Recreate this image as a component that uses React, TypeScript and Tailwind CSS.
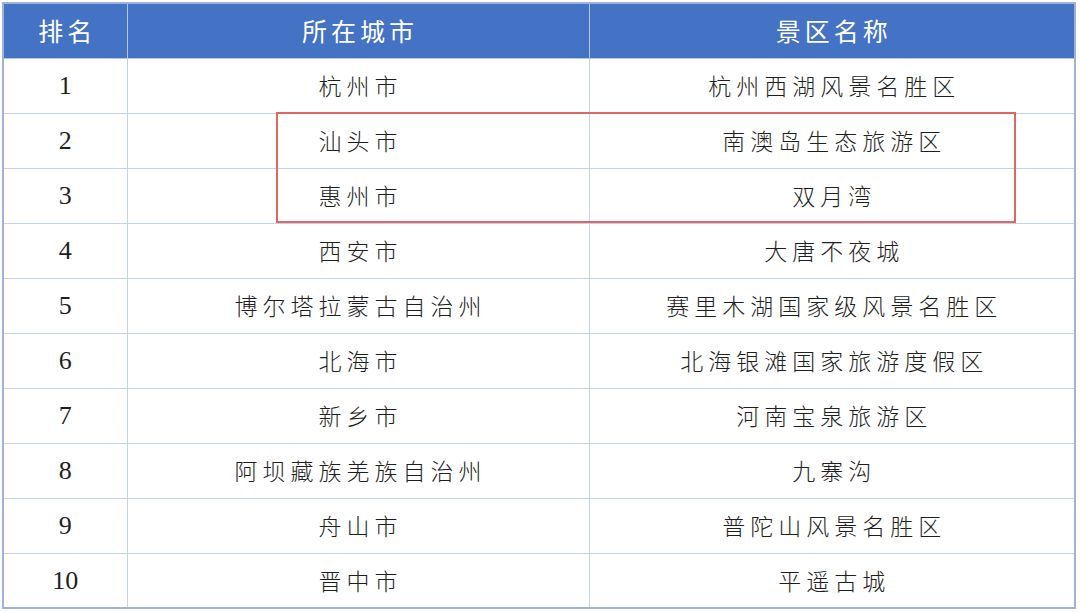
const ROWS: [string, string, string][] = [
  ['1', '杭州市', '杭州西湖风景名胜区'],
  ['2', '汕头市', '南澳岛生态旅游区'],
  ['3', '惠州市', '双月湾'],
  ['4', '西安市', '大唐不夜城'],
  ['5', '博尔塔拉蒙古自治州', '赛里木湖国家级风景名胜区'],
  ['6', '北海市', '北海银滩国家旅游度假区'],
  ['7', '新乡市', '河南宝泉旅游区'],
  ['8', '阿坝藏族羌族自治州', '九寨沟'],
  ['9', '舟山市', '普陀山风景名胜区'],
  ['10', '晋中市', '平遥古城'],
];

const cjk = { fontFamily: '"Noto Sans CJK SC", sans-serif' };
const num = { fontFamily: '"Liberation Serif", serif' };

export default function App() {
  return (
    <div className="w-[1080px] h-[612px] bg-white pt-[2px] pl-[2px]">
      <div className="relative w-[1074px]">
        <table className="w-full border-collapse border-2 border-[#9fb3d9] table-fixed">
          <colgroup>
            <col className="w-[124px]" />
            <col className="w-[462px]" />
            <col />
          </colgroup>
          <thead>
            <tr className="h-[55px] bg-[#4472c4] text-white text-[25px]">
              <th className="border border-[#b4c6e7] font-normal tracking-[4px] pl-[4px]" style={cjk}>排名</th>
              <th className="border border-[#b4c6e7] font-normal tracking-[4px] pl-[4px]" style={cjk}>所在城市</th>
              <th className="border border-[#b4c6e7] font-normal tracking-[4px] pl-[4px]" style={cjk}>景区名称</th>
            </tr>
          </thead>
          <tbody>
            {ROWS.map(([rank, city, spot]) => (
              <tr key={rank} className="h-[55px] text-[#1f1f1f]">
                <td className="border border-[#c5d3ea] text-center text-[26px]" style={num}>{rank}</td>
                <td className="border border-[#c5d3ea] text-center text-[23px] tracking-[5px] pl-[5px] font-light" style={cjk}>{city}</td>
                <td className="border border-[#c5d3ea] text-center text-[23px] tracking-[5px] pl-[5px] font-light" style={cjk}>{spot}</td>
              </tr>
            ))}
          </tbody>
        </table>
        {/* highlight box over rows 2-3 */}
        <div className="absolute left-[274px] top-[110px] w-[740px] h-[111px] border-2 border-[#e06666] pointer-events-none" />
      </div>
    </div>
  );
}
